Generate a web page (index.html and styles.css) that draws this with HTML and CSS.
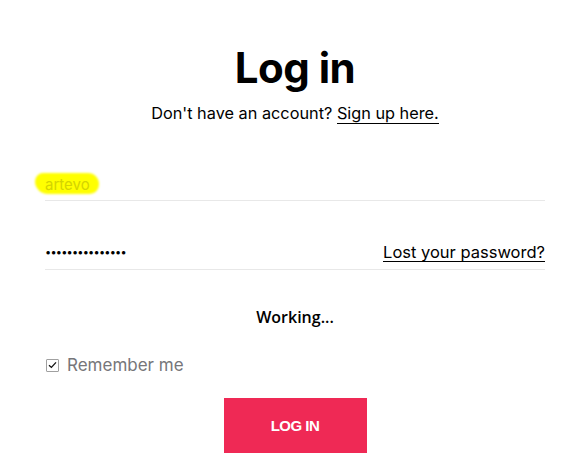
FILE: index.html
```html
<!DOCTYPE html>
<html lang="en">
<head>
  <meta charset="UTF-8">
  <meta name="viewport" content="width=device-width, initial-scale=1.0">
  <title>Log in</title>
  <link rel="stylesheet" href="styles.css">
</head>
<body>

<div class="login-container">
  <h1>Log in</h1>
  <p class="signup">Don't have an account? <a href="#">Sign up here.</a></p>

  <form class="login-form">
    <div class="field">
      <span class="username"><span class="marker"></span><span class="username-text">artevo</span></span>
    </div>

    <div class="field password-field">
      <span class="dots">&bull;&bull;&bull;&bull;&bull;&bull;&bull;&bull;&bull;&bull;&bull;&bull;&bull;&bull;&bull;</span>
      <a href="#" class="lost">Lost your password?</a>
    </div>

    <p class="working">Working...</p>

    <label class="remember">
      <span class="checkbox">
        <svg width="9" height="8" viewBox="0 0 9 8"><path d="M1 4.2 L3.4 6.4 L8 1.4" fill="none" stroke="#111" stroke-width="1.3"/></svg>
      </span>
      Remember me
    </label>

    <div class="actions">
      <button type="button">LOG IN</button>
    </div>
  </form>
</div>

</body>
</html>
```

FILE: styles.css
```css
:root {
  --red: #ef2955;
  --black: #000000;
  --white: #ffffff;
  --grey: #76767a;
  --line: #e8e8e8;
}
body {
  font-family: 'Inter', 'Noto Sans', sans-serif;
  background-color: var(--white);
  color: var(--black);
  margin: 0;
  padding: 0;
}
.login-container {
  width: 500px;
  margin-left: 45px;
  padding-top: 41px;
}
h1 {
  font-size: 42px;
  font-weight: 700;
  text-align: center;
  margin: 0;
  line-height: 54px;
  letter-spacing: -0.5px;
}
.signup {
  text-align: center;
  font-size: 16.3px;
  margin: 6px 0 0;
  line-height: 24px;
}
.signup a {
  color: var(--black);
  text-decoration: none;
  border-bottom: 1px solid var(--black);
}
.login-form {
  margin-top: 31px;
}
.field {
  display: flex;
  align-items: center;
  justify-content: space-between;
  height: 44px;
  border-bottom: 1px solid var(--line);
}
.password-field {
  margin-top: 24px;
}
.username {
  position: relative;
  font-size: 15px;
  color: #d4d400;
  padding-top: 2px;
  margin-top: 10px;
}
.marker {
  position: absolute;
  left: -10px;
  top: 0;
  width: 64px;
  height: 21px;
  background-color: #ffff00;
  border-radius: 9px 12px 10px 14px;
  filter: blur(1.2px);
}
.username-text {
  position: relative;
}
.dots {
  font-size: 11px;
  letter-spacing: -0.8px;
  padding-top: 10px;
}
.lost {
  color: var(--black);
  text-decoration: none;
  font-size: 16.5px;
  border-bottom: 1px solid var(--black);
  line-height: 18px;
  margin-top: 10px;
}
.working {
  text-align: center;
  font-family: 'Open Sans', sans-serif;
  font-weight: 600;
  font-size: 16px;
  margin: 36px 0 0;
}
.remember {
  display: flex;
  align-items: center;
  gap: 8px;
  margin-top: 27px;
  font-size: 17px;
  color: var(--grey);
}
.checkbox {
  display: flex;
  align-items: center;
  justify-content: center;
  width: 11px;
  height: 11px;
  margin-left: 1px;
  border: 1px solid #a0a0a0;
  border-radius: 1px;
}
.actions {
  text-align: center;
  margin-top: 23px;
}
button {
  background-color: var(--red);
  color: var(--white);
  border: none;
  width: 143px;
  height: 55px;
  font-family: 'Liberation Sans', Arial, sans-serif;
  font-weight: 700;
  font-size: 15px;
  letter-spacing: -0.5px;
  cursor: pointer;
}
```
